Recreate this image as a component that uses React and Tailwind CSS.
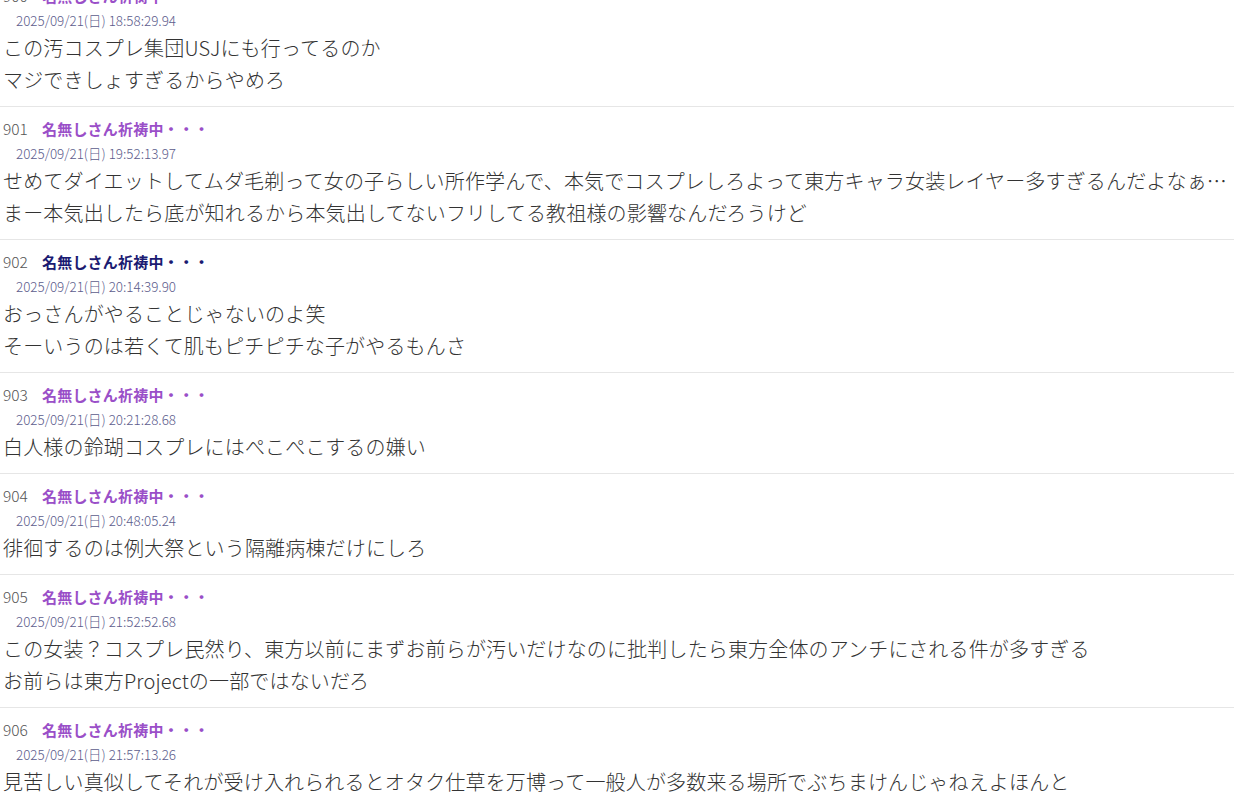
import React from "react";

const posts = [
  {
    no: 900,
    date: "2025/09/21(日) 18:58:29.94",
    lines: ["この汚コスプレ集団USJにも行ってるのか", "マジできしょすぎるからやめろ"],
  },
  {
    no: 901,
    date: "2025/09/21(日) 19:52:13.97",
    lines: [
      "せめてダイエットしてムダ毛剃って女の子らしい所作学んで、本気でコスプレしろよって東方キャラ女装レイヤー多すぎるんだよなぁ…",
      "まー本気出したら底が知れるから本気出してないフリしてる教祖様の影響なんだろうけど",
    ],
  },
  {
    no: 902,
    date: "2025/09/21(日) 20:14:39.90",
    navy: true,
    lines: ["おっさんがやることじゃないのよ笑", "そーいうのは若くて肌もピチピチな子がやるもんさ"],
  },
  {
    no: 903,
    date: "2025/09/21(日) 20:21:28.68",
    lines: ["白人様の鈴瑚コスプレにはぺこぺこするの嫌い"],
  },
  {
    no: 904,
    date: "2025/09/21(日) 20:48:05.24",
    lines: ["徘徊するのは例大祭という隔離病棟だけにしろ"],
  },
  {
    no: 905,
    date: "2025/09/21(日) 21:52:52.68",
    lines: [
      "この女装？コスプレ民然り、東方以前にまずお前らが汚いだけなのに批判したら東方全体のアンチにされる件が多すぎる",
      "お前らは東方Projectの一部ではないだろ",
    ],
  },
  {
    no: 906,
    date: "2025/09/21(日) 21:57:13.26",
    lines: ["見苦しい真似してそれが受け入れられるとオタク仕草を万博って一般人が多数来る場所でぶちまけんじゃねえよほんと"],
  },
];

const Post = ({ post }) => (
  <div className="border-b border-[#e6e6e6] pt-2 pb-[10px] pl-[3px]">
    <div className="flex items-center h-[28px]">
      <span className="w-[39px] text-[15.5px] font-light text-[#555]">{post.no}</span>
      <span
        className={`text-[15px] font-bold tracking-[0.2px] ${post.navy ? "text-[#1b1b72]" : "text-[#9a4fc8]"}`}
      >
        名無しさん祈祷中・・・
      </span>
    </div>
    <div className="h-[20px] leading-[20px] pl-[13px] text-[13.4px] font-light text-[#5c5c8c]">{post.date}</div>
    <div className="mt-[2px] text-[20px] leading-[32px] tracking-[0.16px] font-light text-[#333]">
      {post.lines.map((l, i) => (
        <div key={i} className="whitespace-nowrap overflow-hidden">
          {l}
        </div>
      ))}
    </div>
  </div>
);

export default function App() {
  return (
    <div
      className="w-[1234px] h-[801px] overflow-hidden bg-white"
      style={{ fontFamily: '"Noto Sans CJK JP", "Noto Sans", sans-serif' }}
    >
      <div className="mt-[-26px]">
        {posts.map((p) => (
          <Post key={p.no} post={p} />
        ))}
      </div>
    </div>
  );
}
